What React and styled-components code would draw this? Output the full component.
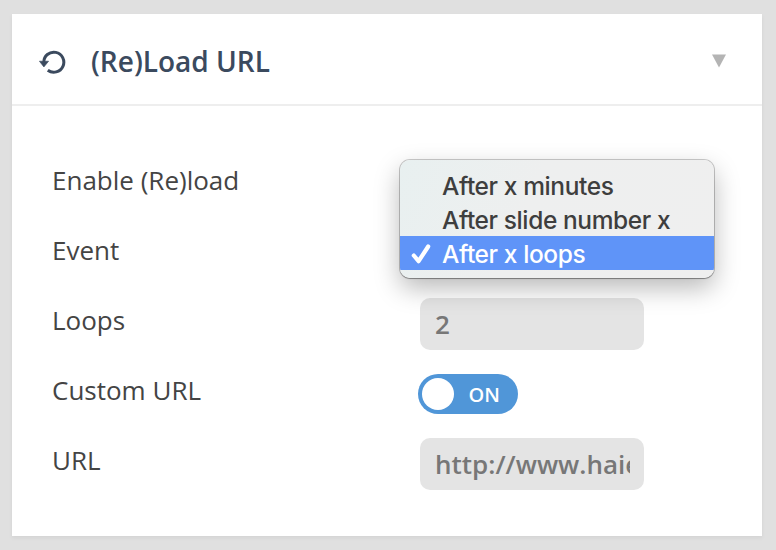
import React from 'react';
import styled, { createGlobalStyle } from 'styled-components';

const GlobalStyle = createGlobalStyle`
  * { box-sizing: border-box; }
  body { margin: 0; background: #e0e0e0; font-family: 'Open Sans', sans-serif; }
`;

const Page = styled.main`
  height: 550px;
  padding: 14px 14px 14px 12px;
  overflow: hidden;
`;

const Card = styled.section`
  height: 522px;
  background: #fff;
  box-shadow: 0 2px 4px rgba(0, 0, 0, 0.06);
`;

const Header = styled.header`
  height: 92px;
  display: flex;
  align-items: center;
  padding: 4px 35px 0 26px;
  border-bottom: 2px solid #eee;
`;

const Title = styled.h1`
  flex: 1;
  margin: 0 0 0 25px;
  font-size: 28px;
  line-height: 38px;
  font-weight: 600;
  color: #3b4a5e;
`;

const Body = styled.div`
  padding: 39px 40px 0;
`;

const Row = styled.div`
  position: relative;
  height: 70px;
  display: grid;
  grid-template-columns: 368px 1fr;
  align-items: center;
`;

const Label = styled.label`
  font-size: 26px;
  line-height: 36px;
  color: #444;
`;

const Field = styled.input`
  width: 224px;
  height: 52px;
  margin-top: 8px;
  padding: 0 14px 0 15px;
  border: 0;
  border-radius: 10px;
  background: #e4e4e4;
  color: #777;
  font: 600 26px 'Open Sans', sans-serif;
`;

const Toggle = styled.button`
  width: 100px;
  height: 40px;
  margin: 8px 0 0 -2px;
  padding: 0 18px 0 4px;
  display: flex;
  align-items: center;
  justify-content: space-between;
  border: 0;
  border-radius: 20px;
  background: #5096d8;
  color: #fff;
  font: 600 20px 'Open Sans', sans-serif;
`;

const Knob = styled.span`
  width: 32px;
  height: 32px;
  border-radius: 50%;
  background: #fff;
`;

const Menu = styled.ul`
  position: absolute;
  z-index: 1;
  left: 348px;
  top: -55px;
  width: 314px;
  margin: 0;
  padding: 8px 0;
  list-style: none;
  overflow: hidden;
  border-radius: 10px;
  background: linear-gradient(115deg, #e8f0f0 0%, #eeefef 40%, #efefef 100%);
  box-shadow: 0 0 0 1px rgba(0, 0, 0, 0.2), 0 1px 1px rgba(0, 0, 0, 0.25), 0 10px 26px rgba(0, 0, 0, 0.28);
`;

const Option = styled.li`
  height: 34px;
  display: grid;
  grid-template-columns: 42px 1fr;
  align-items: center;
  font: 500 24.5px/34px Inter, sans-serif;
  letter-spacing: -0.4px;
  white-space: nowrap;
  color: ${(p) => (p.$selected ? '#fff' : '#3e3e3e')};
  background: ${(p) => (p.$selected ? '#5f94f8' : 'transparent')};
`;

const Check = styled.svg`
  grid-column: 1;
  margin: 2px 0 0 11px;
`;

const OptionText = styled.span`
  grid-column: 2;
  padding-top: 2px;
  line-height: 32px;
`;

const ReloadIcon = () => (
  <svg width="28" height="26" viewBox="0 0 28 26" fill="none">
    <path d="M5.8 14.4A10 10 0 1 1 9.8 22.2" stroke="#3b4a5e" strokeWidth="3" />
    <path d="M1.4 13.2h9.2L5.9 19z" fill="#3b4a5e" stroke="#3b4a5e" strokeWidth=".6" strokeLinejoin="round" />
  </svg>
);

const Chevron = () => (
  <svg width="16" height="14" viewBox="0 0 16 14">
    <path d="M1 .5h14L8 13.5z" fill="#b4b4b4" />
  </svg>
);

const options = ['After x minutes', 'After slide number x', 'After x loops'];

export default function App() {
  return (
    <>
      <GlobalStyle />
      <Page>
        <Card>
          <Header>
            <ReloadIcon />
            <Title>(Re)Load URL</Title>
            <Chevron />
          </Header>
          <Body>
            <Row><Label>Enable (Re)load</Label></Row>
            <Row>
              <Label>Event</Label>
              <Menu>
                {options.map((text, i) => (
                  <Option key={text} $selected={i === 2}>
                    {i === 2 && (
                      <Check width="20" height="20" viewBox="0 0 20 20" fill="none">
                        <path d="M2.8 11.5l4.8 5.7L17.2 2.5" stroke="#fff" strokeWidth="4.2" strokeLinecap="round" strokeLinejoin="round" />
                      </Check>
                    )}
                    <OptionText>{text}</OptionText>
                  </Option>
                ))}
              </Menu>
            </Row>
            <Row><Label>Loops</Label><Field defaultValue="2" /></Row>
            <Row>
              <Label>Custom URL</Label>
              <Toggle><Knob />ON</Toggle>
            </Row>
            <Row><Label>URL</Label><Field defaultValue="http://www.haie" /></Row>
          </Body>
        </Card>
      </Page>
    </>
  );
}
